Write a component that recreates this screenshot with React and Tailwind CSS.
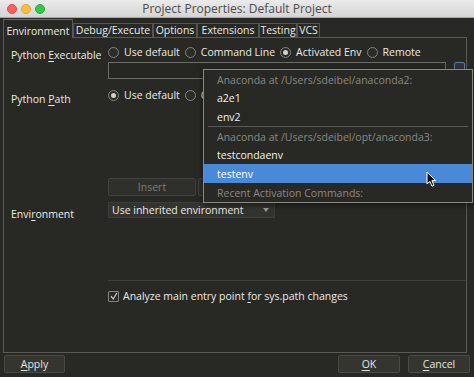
import React from "react";

const Radio = ({ checked }) => (
  <span className="w-[11px] h-[11px] rounded-full border border-[#85857f] bg-[#2b2b27] flex items-center justify-center shrink-0">
    {checked && <span className="w-[5px] h-[5px] rounded-full bg-[#d2d2cd]" />}
  </span>
);

const RadioOption = ({ checked, children }) => (
  <label className="flex items-center gap-[5px] mr-[5px] whitespace-nowrap">
    <Radio checked={checked} />
    <span>{children}</span>
  </label>
);

const U = ({ children }) => <span className="underline underline-offset-2">{children}</span>;

const Button = ({ children, disabled, className = "" }) => (
  <button
    className={
      (disabled
        ? "bg-[#2f2f2b] border-[#42423d] text-[#7d7d78] "
        : "bg-[#35352f] border-[#4a4a45] text-[#e4e4e0] ") +
      "h-[18px] rounded-[2px] border flex items-center justify-center " +
      className
    }
  >
    {children}
  </button>
);

const tabs = [
  { name: "Environment", w: "w-[70px]", active: true },
  { name: "Debug/Execute", w: "w-[80px]" },
  { name: "Options", w: "w-[44px]" },
  { name: "Extensions", w: "w-[62px]" },
  { name: "Testing", w: "w-[38px]" },
  { name: "VCS", w: "w-[23px]" },
];

export default function App() {
  return (
    <div className="w-[474px] h-[377px] bg-[#282824] text-[#ebebe7] text-[10.5px] font-medium leading-[16px] relative overflow-hidden font-['Open_Sans',sans-serif]">
      {/* title bar */}
      <div className="h-[18px] bg-gradient-to-b from-[#ebebeb] to-[#d4d4d4] border-b border-[#a8a8a8] flex items-center relative">
        <div className="flex items-center gap-[4px] pl-[7px]">
          <span className="w-[10px] h-[10px] rounded-full bg-[#fc605b] border border-[#de4a44]" />
          <span className="w-[10px] h-[10px] rounded-full bg-[#fdbc40] border border-[#dea033]" />
          <span className="w-[10px] h-[10px] rounded-full bg-[#34c84a] border border-[#27aa37]" />
        </div>
        <div className="absolute inset-0 flex items-center justify-center text-[12px] font-normal text-[#4b4b4b]">
          Project Properties: Default Project
        </div>
      </div>

      {/* tabs */}
      <div className="h-[19px] flex items-end pl-[3px]">
        {tabs.map((t) =>
          t.active ? (
            <div
              key={t.name}
              className={`${t.w} h-[19px] relative top-px z-10 bg-[#282824] border border-b-0 border-[#5a5a55] border-t-[#4d7295] flex items-center justify-center pt-[3px]`}
            >
              {t.name}
            </div>
          ) : (
            <div
              key={t.name}
              className={`${t.w} h-[14px] border border-b-0 border-[#55554f] flex items-center justify-center leading-[13px]`}
            >
              {t.name}
            </div>
          )
        )}
      </div>

      {/* panel */}
      <div className="ml-[3px] w-[464px] h-[316px] border border-[#5a5a55] pl-[7px] pt-[6px] flex flex-col">
        {/* Python Executable */}
        <div className="flex">
          <div className="w-[97px] shrink-0 mt-[3px]">
            Python <U>E</U>xecutable
          </div>
          <div className="flex-1">
            <div className="h-[16px] flex items-center">
              <RadioOption>Use default</RadioOption>
              <RadioOption>Command Line</RadioOption>
              <RadioOption checked>Activated Env</RadioOption>
              <RadioOption>Remote</RadioOption>
            </div>
            <div className="mt-[2px] flex">
              <div className="w-[338px] h-[17px] border border-[#6c6c67] bg-[#262622]" />
              <div className="ml-[8px] w-[11px] h-[17px] rounded-[2px] border border-[#5d7d9f] bg-[#2e343b]" />
            </div>
          </div>
        </div>

        {/* Python Path */}
        <div className="flex mt-[8px]">
          <div className="w-[97px] shrink-0 mt-[4px]">
            Python <U>P</U>ath
          </div>
          <div className="flex-1">
            <div className="h-[16px] flex items-center">
              <RadioOption checked>Use default</RadioOption>
              <div className="w-[19px] overflow-hidden">
                <RadioOption>Custom</RadioOption>
              </div>
            </div>
            <div className="mt-[75px] flex gap-[2px]">
              <Button disabled className="w-[88px]">Insert</Button>
              <Button disabled className="w-[88px]" />
            </div>
          </div>
        </div>

        {/* Environment */}
        <div className="flex mt-[6px]">
          <div className="w-[97px] shrink-0 mt-[4px]">
            Envi<U>r</U>onment
          </div>
          <div className="flex-1">
            <div className="w-[167px] h-[16px] bg-[#33332f] border border-[#3d3d39] flex items-center justify-between pl-[3px] pr-[5px]">
              <span>Use inherited environment</span>
              <svg width="6" height="4" viewBox="0 0 6 4">
                <path d="M0 0 L6 0 L3 4 Z" fill="#9a9a95" />
              </svg>
            </div>
            <div className="mt-[4px] h-[59px] border-b border-[#3f3f3a]" />
          </div>
        </div>

        {/* checkbox */}
        <div className="flex mt-[7px] pl-[97px] items-center gap-[4px]">
          <span className="w-[11px] h-[11px] border border-[#85857f] bg-[#2b2b27] rounded-[1px] flex items-center justify-center">
            <svg width="8" height="8" viewBox="0 0 8 8">
              <path d="M1 4.2 L3.2 7 L7 0.8" fill="none" stroke="#d6d6d1" strokeWidth="1.1" />
            </svg>
          </span>
          <span>
            Analyze main entry point <U>f</U>or sys.path changes
          </span>
        </div>
      </div>

      {/* bottom buttons */}
      <div className="mt-[2px] flex px-[4px]">
        <Button className="w-[61px]">
          <span>
            <U>A</U>pply
          </span>
        </Button>
        <div className="flex-1" />
        <Button className="w-[62px]">
          <U>O</U>K
        </Button>
        <Button className="w-[62px] ml-[8px]">
          <span>
            <U>C</U>ancel
          </span>
        </Button>
      </div>

      {/* popup menu */}
      <div className="absolute left-[203px] top-[69px] w-[270px] h-[134px] border border-[#8a8a85] bg-[#282824] shadow-[0_2px_6px_rgba(0,0,0,0.5)]">
        <div className="h-[19px] flex items-center pl-[13px] text-[#8a8a85]">
          Anaconda at /Users/sdeibel/anaconda2:
        </div>
        <div className="h-[18px] flex items-center pl-[13px] text-[#f2f2ee]">a2e1</div>
        <div className="h-[19px] flex items-center pl-[13px] text-[#f2f2ee]">env2</div>
        <div className="h-px mx-[4px] bg-[#5a5a55]" />
        <div className="h-[19px] flex items-center pl-[13px] text-[#8a8a85]">
          Anaconda at /Users/sdeibel/opt/anaconda3:
        </div>
        <div className="h-[18px] flex items-center pl-[13px] text-[#f2f2ee]">testcondaenv</div>
        <div className="h-[19px] flex items-center pl-[13px] bg-[#4a89d8] text-white">testenv</div>
        <div className="h-[19px] flex items-center pl-[13px] text-[#8a8a85]">Recent Activation Commands:</div>
      </div>

      {/* mouse cursor */}
      <svg className="absolute left-[426px] top-[171px]" width="12" height="17" viewBox="0 0 12 17">
        <path
          d="M1 1 L1 13 L3.8 10.4 L6 15.2 L8 14.3 L5.9 9.6 L9.6 9.6 Z"
          fill="#111"
          stroke="#fff"
          strokeWidth="1"
          strokeLinejoin="round"
        />
      </svg>
    </div>
  );
}
